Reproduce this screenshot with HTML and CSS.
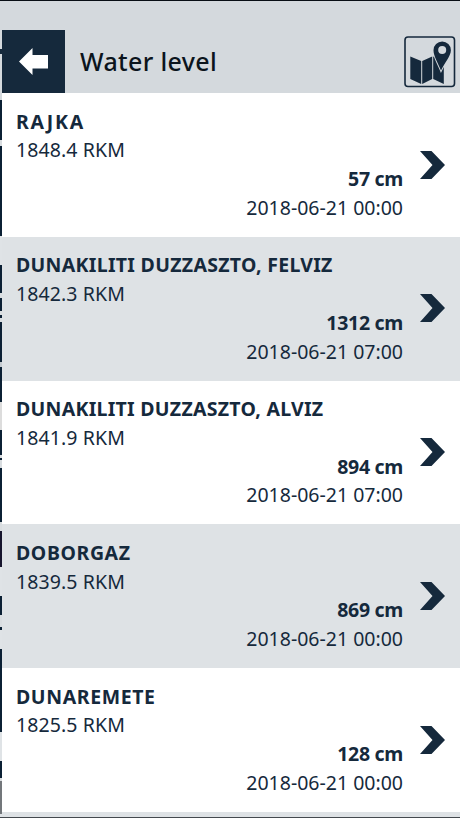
FILE: index.html
```
<!DOCTYPE html>
<html lang="en">
<head>
<meta charset="utf-8">
<title>Water level</title>
<link rel="stylesheet" href="styles.css">
</head>
<body>
<div class="app">
  <div class="drawer-edge"></div>
  <main class="page">
    <header class="header">
      <div class="back"><svg width="63" height="63" viewBox="0 0 63 63"><path d="M17 31.500 30.500 18V25H46V38.500H30.500V45Z" fill="#fff"/></svg></div>
      <h1><span>Water level</span></h1>
      <svg class="map" width="52" height="52" viewBox="0 0 52 52">
        <rect x="1" y="1" width="49.500" height="49.500" rx="3" fill="none" stroke="#15293c" stroke-width="1.600"/>
        <path d="M6.300 20.500 17.200 25V48L6.300 43ZM18.200 25 28.200 20.500V43L18.200 48ZM29.200 20.500 39.800 25V48L29.200 43Z" fill="#15293c"/>
        <path d="M37 34.500C34 27 29.500 20 29.500 14.200A8.700 8.700 0 0 1 46.900 14.200C46.900 20 40.500 27 37 34.500Z" fill="#15293c" stroke="#d4d9dd" stroke-width="2" paint-order="stroke"/>
        <circle cx="38.200" cy="14" r="4" fill="#d4d9dd"/>
      </svg>
    </header>
    <section class="row">
      <h2><span class="n1">RAJKA</span></h2><p class="km"><span>1848.4 RKM</span></p>
      <p class="level"><span>57 cm</span></p><p class="date"><span>2018-06-21 00:00</span></p>
      <svg class="chevron" width="26" height="28" viewBox="0 0 26 28"><path d="M0 0H11.500L25 14 11.500 28H0L12.500 14Z"/></svg>
    </section>
    <section class="row alt">
      <h2><span class="n2">DUNAKILITI DUZZASZTO, FELVIZ</span></h2><p class="km"><span>1842.3 RKM</span></p>
      <p class="level"><span>1312 cm</span></p><p class="date"><span>2018-06-21 07:00</span></p>
      <svg class="chevron" width="26" height="28" viewBox="0 0 26 28"><path d="M0 0H11.500L25 14 11.500 28H0L12.500 14Z"/></svg>
    </section>
    <section class="row">
      <h2><span class="n3">DUNAKILITI DUZZASZTO, ALVIZ</span></h2><p class="km"><span>1841.9 RKM</span></p>
      <p class="level"><span>894 cm</span></p><p class="date"><span>2018-06-21 07:00</span></p>
      <svg class="chevron" width="26" height="28" viewBox="0 0 26 28"><path d="M0 0H11.500L25 14 11.500 28H0L12.500 14Z"/></svg>
    </section>
    <section class="row alt">
      <h2><span class="n4">DOBORGAZ</span></h2><p class="km"><span>1839.5 RKM</span></p>
      <p class="level"><span>869 cm</span></p><p class="date"><span>2018-06-21 00:00</span></p>
      <svg class="chevron" width="26" height="28" viewBox="0 0 26 28"><path d="M0 0H11.500L25 14 11.500 28H0L12.500 14Z"/></svg>
    </section>
    <section class="row">
      <h2><span class="n5">DUNAREMETE</span></h2><p class="km"><span>1825.5 RKM</span></p>
      <p class="level"><span>128 cm</span></p><p class="date"><span>2018-06-21 00:00</span></p>
      <svg class="chevron" width="26" height="28" viewBox="0 0 26 28"><path d="M0 0H11.500L25 14 11.500 28H0L12.500 14Z"/></svg>
    </section>
    <div class="next-row"></div>
  </main>
</div>
</body>
</html>
```
FILE: styles.css
```
* { box-sizing: border-box; }
body { margin: 0; overflow: hidden; font-family: "Noto Sans", sans-serif; color: #15293c; }
h1, h2, p { margin: 0; white-space: nowrap; }
svg { display: block; }
.app { display: flex; height: 818px; border-top: 1px solid #080d14; border-bottom: 1px solid #44494e; background: #d4d9dd; }
.drawer-edge {
  flex: 0 0 2px;
  background: linear-gradient(#d4d9dd 48px, #15293c 48px 53px, #d4d9dd 53px 99px, #0b2034 99px 139px, #d9dde0 139px 145px, #0b2034 145px 235px, #dfe3e6 235px 264px, #0b2034 264px 292px, #d9dde0 292px 297px, #0b2034 297px 310px, #d9dde0 310px 314px, #0b2034 314px 317px, #d9dde0 317px 321px, #0b2034 321px 361px, #c5cbd0 361px 366px, #0b2034 366px 401px, #dcdcdc 401px 429px, #0b2034 429px 454px, #d9dde0 454px 457px, #0b2034 457px 459px, #d9dde0 459px 467px, #0b2034 467px 521px, #d9dde0 521px 530px, #17152d 530px 566px, #dfe3e6 566px 595px, #0b2034 595px 614px, #d9dde0 614px 626px, #0b2034 626px 629px, #dfe3e6 629px 648px, #0b2034 648px 731px, #dfe3e6 731px 760px, #0b2034 760px 777px, #d9dde0 777px 780px, #73777b 780px 813px, #dfe3e6 813px);
}
.page { flex: 1; min-width: 0; }
.header { display: flex; align-items: flex-end; height: 92px; padding-right: 4px; background: #d4d9dd; }
.back { width: 63px; height: 63px; background: #15293c; }
h1 { flex: 1; height: 63px; padding-left: 15px; color: #0b141c; font-size: 25px; line-height: 62px; font-weight: 500; letter-spacing: 0.350px; }
.map { margin-bottom: 5px; }
.row {
  display: grid;
  grid-template: repeat(4, 28.750px) / 1fr 26px;
  column-gap: 17px;
  height: 143.750px;
  padding: 14.500px 14px 0 14px;
  background: #fff;
  font-size: 19.500px;
  line-height: 28.750px;
}
.row.alt { background: #dee2e5; }
.row h2 { grid-area: 1 / 1 / 2 / 3; font-size: inherit; font-weight: 700; }
.n1 { letter-spacing: 1.800px; }
.n2 { letter-spacing: 0.300px; }
.n3 { letter-spacing: 0.270px; }
.n4 { letter-spacing: 0.600px; }
.n5 { letter-spacing: 0.600px; }
.km { grid-area: 2 / 1; letter-spacing: 0.100px; }
.level { grid-area: 3 / 1; text-align: right; font-weight: 700; letter-spacing: -0.300px; }
.date { grid-area: 4 / 1; text-align: right; }
.chevron { grid-area: 1 / 2 / 5 / 3; align-self: center; margin-bottom: 1px; fill: #15293c; }
.next-row { height: 5.250px; background: #dee2e5; }
```
